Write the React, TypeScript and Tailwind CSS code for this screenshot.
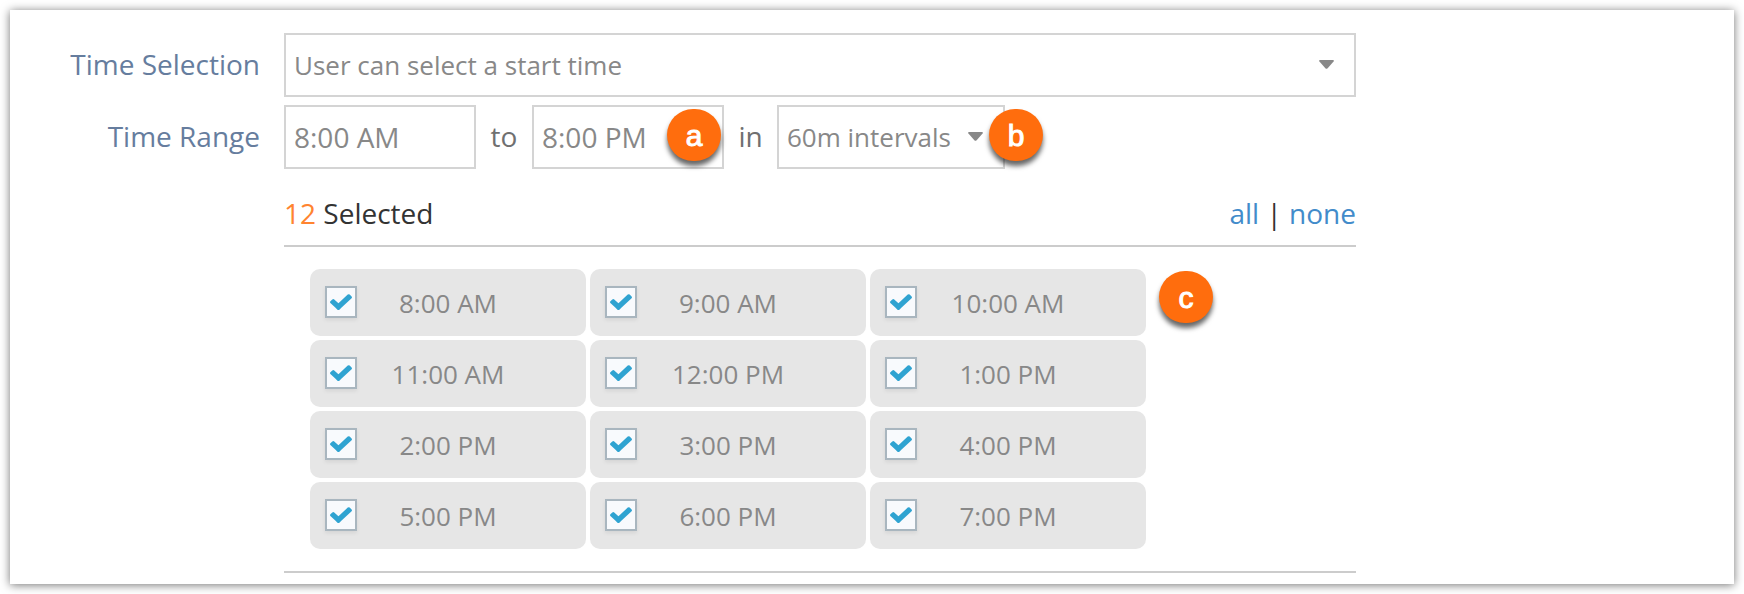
import React from 'react';
import clsx from 'clsx';

const TIMES = [
  '8:00 AM', '9:00 AM', '10:00 AM',
  '11:00 AM', '12:00 PM', '1:00 PM',
  '2:00 PM', '3:00 PM', '4:00 PM',
  '5:00 PM', '6:00 PM', '7:00 PM',
];

const FIELD = 'h-16 border-2 border-[#d4d4d4] bg-white text-[#888888] outline-none';
const ROW_LABEL = 'self-center pb-[2px] text-right text-[#667d9e]';

const Marker: React.FC<{ letter: string; className?: string }> = ({ letter, className }) => (
  <span
    className={clsx(
      'absolute flex h-[52px] w-[54px] items-center justify-center rounded-full bg-[#ff6d0d] pt-[2px] font-["Liberation_Sans",sans-serif] text-[30px] leading-none text-white shadow-[0_5px_5px_rgba(0,0,0,0.6)] [-webkit-text-stroke:1px_white]',
      className,
    )}
  >
    {letter}
  </span>
);

const Caret = () => (
  <svg className="pointer-events-none absolute top-[27px] right-[22px] h-[9px] w-[15px]" viewBox="0 0 15 9" aria-hidden="true">
    <path d="M1 0h13q1.4 0.4 0.6 1.5L8.4 8.4q-0.9 0.9-1.8 0L0.4 1.5Q-0.4 0.4 1 0z" fill="#888888" />
  </svg>
);

const TimeTile: React.FC<{ time: string; checked: boolean; onChange: () => void }> = ({ time, checked, onChange }) => (
  <label className="relative flex h-[67px] items-center justify-center rounded-[10px] bg-[#e6e6e6] pt-[2px] text-[26px] text-[#888888]">
    <input
      type="checkbox"
      checked={checked}
      onChange={onChange}
      className="absolute top-[17px] left-[15px] size-8 appearance-none border-2 border-[#a9b6bf] bg-[#f8fafd] shadow-[0_2px_4px_rgba(0,0,0,0.08)]"
    />
    {checked && (
      <svg className="pointer-events-none absolute top-[24px] left-[20px] h-[17px] w-[22px]" viewBox="121 242 1550 1280" preserveAspectRatio="none" aria-hidden="true">
        <path
          fill="#2fa3d1"
          d="M1671 566q0 40-28 68l-724 724-136 136q-28 28-68 28t-68-28l-136-136-362-362q-28-28-28-68t28-68l136-136q28-28 68-28t68 28l294 295 656-657q28-28 68-28t68 28l136 136q28 28 28 68z"
        />
      </svg>
    )}
    {time}
  </label>
);

export default function App() {
  const [selected, setSelected] = React.useState<string[]>(TIMES);

  const toggle = (time: string) => {
    setSelected((prev) => (prev.includes(time) ? prev.filter((t) => t !== time) : [...prev, time]));
  };

  const selectWith = (times: string[]) => (e: React.MouseEvent) => {
    e.preventDefault();
    setSelected(times);
  };

  return (
    <div className="bg-white p-[10px] font-['Open_Sans',sans-serif]">
      <main className="bg-white pt-[23px] pb-[11px] shadow-[0_1px_9px_rgba(0,0,0,0.55)]">
        <div className="grid max-w-[1346px] grid-cols-[250px_1fr] gap-x-6 gap-y-2 text-[28px]">
          <label htmlFor="time-selection" className={ROW_LABEL}>
            Time Selection
          </label>
          <div className="relative">
            <select id="time-selection" className={clsx(FIELD, 'w-full appearance-none px-2 text-[26px]')}>
              <option>User can select a start time</option>
            </select>
            <Caret />
          </div>

          <label htmlFor="time-from" className={ROW_LABEL}>
            Time Range
          </label>
          <div className="flex items-center text-[#707070]">
            <input id="time-from" defaultValue="8:00 AM" className={clsx(FIELD, 'w-48 px-2')} />
            <label htmlFor="time-to" className="w-14 pb-[2px] text-center">
              to
            </label>
            <div className="relative">
              <input id="time-to" defaultValue="8:00 PM" className={clsx(FIELD, 'w-48 px-2')} />
              <Marker letter="a" className="top-1 right-[3px]" />
            </div>
            <label htmlFor="interval" className="w-[53px] pb-[2px] text-center">
              in
            </label>
            <div className="relative">
              <select id="interval" className={clsx(FIELD, 'w-[228px] appearance-none px-2 text-[26px]')}>
                <option>60m intervals</option>
              </select>
              <Caret />
              <Marker letter="b" className="top-1 -right-[38px]" />
            </div>
          </div>

          <section className="col-start-2 border-b-2 border-[#cccccc] pt-2">
            <header className="flex h-[62px] justify-between border-b-2 border-[#cccccc] pt-2 leading-10 text-[#333333]">
              <p>
                <span className="text-[#ff8430]">{selected.length}</span> Selected
              </p>
              <p>
                <a href="#all" className="text-[#428bca]" onClick={selectWith(TIMES)}>all</a>
                {' | '}
                <a href="#none" className="text-[#428bca]" onClick={selectWith([])}>none</a>
              </p>
            </header>
            <div className="relative mx-[26px] my-[22px] grid w-[836px] grid-cols-3 gap-1">
              {TIMES.map((time) => (
                <TimeTile key={time} time={time} checked={selected.includes(time)} onChange={() => toggle(time)} />
              ))}
              <Marker letter="c" className="top-[2px] left-[849px]" />
            </div>
          </section>
        </div>
      </main>
    </div>
  );
}
